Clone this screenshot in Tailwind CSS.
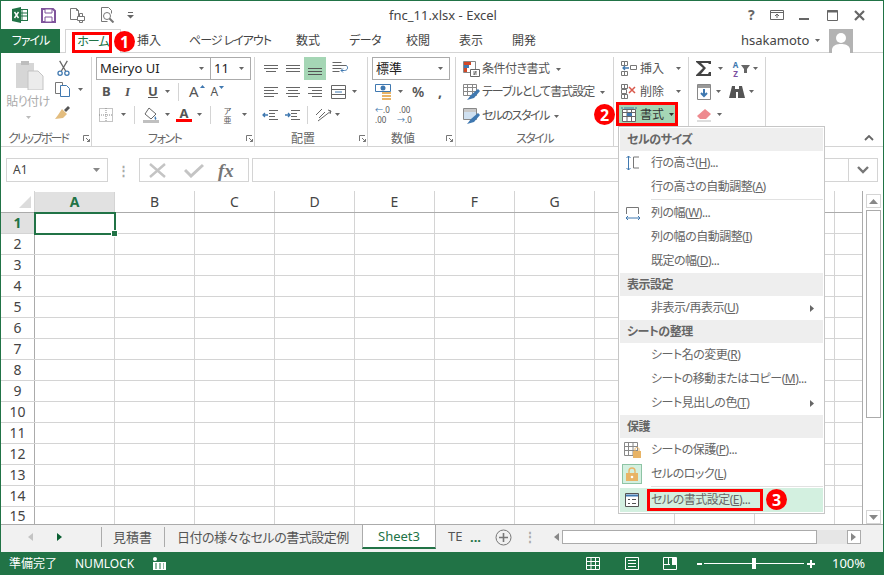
<!DOCTYPE html>
<html lang="ja">
<head>
<meta charset="UTF-8" />
<title>fnc_11.xlsx - Excel</title>
<script src="https://cdn.jsdelivr.net/npm/@tailwindcss/browser@4"></script>
</head>
<body class="bg-white">
<div class="relative w-[884px] h-[575px] overflow-hidden border-l border-r border-t border-[#217346] bg-white text-[12px] leading-none text-[#444] [font-feature-settings:'palt'] font-['Noto_Sans','Noto_Sans_CJK_JP',sans-serif]">

  <!-- title bar -->
  <div class="flex items-center h-[28px]">
    <svg class="ml-[11px]" width="16" height="16" viewBox="0 0 16 16"><rect x="6.5" y="2.5" width="9" height="11" fill="#fff" stroke="#217346"/><path d="M10 3v10M6 6h9M6 9h9" stroke="#217346"/><path d="M0 2l9-2v16l-9-2z" fill="#217346"/><path d="M2.5 5l4 6M6.5 5l-4 6" stroke="#fff" stroke-width="1.4"/></svg>
    <svg class="ml-[13px]" width="15" height="15" viewBox="0 0 15 15"><path d="M1 1h11l2 2v11H1z" fill="none" stroke="#80559c" stroke-width="2"/><path d="M4 1h7v4H4zM4 9h7v5H4z" fill="#fff" stroke="#80559c"/></svg>
    <svg class="ml-[13px]" width="17" height="16" viewBox="0 0 17 16" fill="none" stroke="#777"><path d="M1.500 1.500h6l2 2v9h-8zM7.500 1.500v2h2"/><path d="M8.500 9.500h7v4h-7zM10.500 9.500v-3h3v3M10.500 13.500v2h3v-2" fill="#fff"/></svg>
    <svg class="ml-[14px]" width="16" height="16" viewBox="0 0 16 16" fill="none" stroke="#777"><path d="M1.500 14.500v-14h7l3 3v3"/><circle cx="7" cy="9" r="3.500"/><path d="M9.500 11.500l4 4" stroke-width="2"/><path d="M1.500 14.500h6"/></svg>
    <svg class="ml-[11px]" width="7" height="7" viewBox="0 0 7 7" fill="#666"><path d="M1 0h5v1H1zM0 3h7L3.500 6.500z"/></svg>
    <span class="ml-[255px] w-[108px] text-[13px] text-[#444] whitespace-nowrap">fnc_11.xlsx - Excel</span>
    <span class="ml-[251px] w-[12px] text-[14px] font-bold text-[#666]">?</span>
    <svg class="ml-[10px]" width="14" height="11" viewBox="0 0 14 11" fill="none" stroke="#666"><path d="M.5 .5h13v9H.5zM.5 2.500h13"/><path d="M7 8V4M5 6l2-2 2 2"/></svg>
    <svg class="ml-[15px]" width="10" height="10" viewBox="0 0 10 10"><path d="M0 8h10v2H0z" fill="#666"/></svg>
    <svg class="ml-[18px]" width="11" height="11" viewBox="0 0 11 11" fill="none" stroke="#666"><path d="M.5 .5h10v10H.5z"/><path d="M0 1.500h11" stroke-width="2"/></svg>
    <svg class="ml-[16px]" width="11" height="11" viewBox="0 0 11 11" stroke="#666" stroke-width="2.200"><path d="M1 1l9 9M10 1l-9 9"/></svg>
  </div>

  <!-- ribbon tabs -->
  <div class="flex items-stretch h-[24px]">
    <div class="flex items-center justify-center w-[59px] bg-[#217346] text-white tracking-[-1px]">ファイル</div>
    <div class="w-[5px] border-b border-[#d4d4d4]"></div>
    <div class="flex items-center justify-center w-[56px] border border-b-0 border-[#d4d4d4] text-[#217346] tracking-[-1px]">ホーム</div>
    <div class="flex flex-1 items-center border-b border-[#d4d4d4] text-[#444]">
      <span class="ml-[16px] w-[52px]">挿入</span>
      <span class="w-[107px] tracking-[-1px] whitespace-nowrap">ページ レイアウト</span>
      <span class="w-[53px]">数式</span>
      <span class="w-[57px] tracking-[-0.5px]">データ</span>
      <span class="w-[53px]">校閲</span>
      <span class="w-[53px]">表示</span>
      <span class="w-[229px]">開発</span>
      <span class="w-[66px] text-[13px]">hsakamoto</span>
      <svg class="ml-[8px]" width="5" height="3"><path d="M0 0h5L2.500 3z" fill="#666"/></svg>
      <div class="ml-[9px] w-[24px] h-[24px] bg-[#b3b3b3] overflow-hidden flex items-end justify-center">
        <svg width="24" height="24" viewBox="0 0 24 24" fill="#fff"><circle cx="12" cy="9" r="5"/><path d="M3 24v-4c1-4 5-5 9-5s8 1 9 5v4z"/></svg>
      </div>
    </div>
  </div>

  <!-- ribbon -->
  <div class="flex items-stretch h-[94px] pt-[4px] border-b border-[#d4d4d4] text-[#555]">

    <!-- clipboard -->
    <div class="flex flex-col w-[91px] border-r border-[#d4d4d4]">
      <div class="flex flex-1">
        <div class="flex flex-col items-center w-[52px] pl-[2px]">
          <svg class="mt-[3px] ml-[4px]" width="30" height="30" viewBox="0 0 30 30"><path d="M1 3h18v25H1z" fill="#d6d6d6"/><path d="M6 1h8v4H6z" fill="#bdbdbd"/><path d="M13 11h10l5 5v14H13z" fill="#ececec" stroke="#c4c4c4"/></svg>
          <span class="mt-[6px] text-[#aaa] whitespace-nowrap tracking-[-0.5px]">貼り付け</span>
          <svg class="mt-[8px]" width="5" height="3"><path d="M0 0h5L2.500 3z" fill="#bbb"/></svg>
        </div>
        <div class="flex flex-col">
          <svg class="ml-[3px] mt-[3px]" width="15" height="17" viewBox="0 0 15 20" fill="none"><path d="M3 1l7 12M12 1L5 13" stroke="#666" stroke-width="1.500"/><circle cx="3.500" cy="15.500" r="2.500" stroke="#3f78b0" stroke-width="1.500"/><circle cx="11.500" cy="15.500" r="2.500" stroke="#3f78b0" stroke-width="1.500"/></svg>
          <div class="flex items-center mt-[5px]">
            <svg class="ml-[2px]" width="16" height="15" viewBox="0 0 16 15" fill="#fff" stroke="#777"><path d="M.5 .5h7v11h-7z"/><path d="M5.500 3.500h6l3 3v8h-9z" stroke="#3f78b0"/></svg>
            <svg class="ml-[7px]" width="5" height="3"><path d="M0 0h5L2.500 3z" fill="#666"/></svg>
          </div>
          <svg class="mt-[8px] ml-[1px]" width="16" height="15" viewBox="0 0 16 15"><path d="M10 5l4-4 2 2-4 4z" fill="#555"/><path d="M8 4l5 5-4 4-8 1 3-4z" fill="#e3bd7f"/></svg>
        </div>
      </div>
      <div class="flex items-center h-[15px] text-[#666]"><span class="ml-[7px] w-[75px] whitespace-nowrap tracking-[-2px]">クリップボード</span><svg width="7" height="7" viewBox="0 0 7 7" fill="none" stroke="#777"><path d="M.5 6V.5H6M3 3l3.500 3.500M6.500 4v2.500H4"/></svg></div>
    </div>

    <!-- font -->
    <div class="flex flex-col w-[163px] border-r border-[#d4d4d4]">
      <div class="flex h-[23px] ml-[4px] text-[#222]">
        <div class="flex items-center justify-between w-[115px] pl-[3px] pr-[6px] border border-[#ababab] text-[13px]">Meiryo UI<svg width="5" height="3"><path d="M0 0h5L2.500 3z" fill="#666"/></svg></div>
        <div class="flex items-center justify-between w-[40px] pl-[3px] pr-[6px] border border-l-0 border-[#ababab] text-[13px]">11<svg width="5" height="3"><path d="M0 0h5L2.500 3z" fill="#666"/></svg></div>
      </div>
      <div class="flex items-center h-[23px] text-[#555]">
        <span class="ml-[10px] w-[23px] text-[13px] font-bold">B</span>
        <span class="w-[23px] text-[13px] italic font-['Liberation_Serif',serif] font-bold">I</span>
        <span class="w-[17px] text-[13px] font-bold underline">U</span>
        <svg width="5" height="3"><path d="M0 0h5L2.500 3z" fill="#666"/></svg>
        <div class="ml-[8px] w-px h-[18px] bg-[#d4d4d4]"></div>
        <span class="ml-[10px] text-[15px]">A</span>
        <svg class="ml-px mb-[10px]" width="5" height="3"><path d="M0 3h5L2.500 0z" fill="#3f78b0"/></svg>
        <span class="ml-[6px] text-[12px]">A</span>
        <svg class="ml-px mb-[8px]" width="5" height="3"><path d="M0 0h5L2.500 3z" fill="#3f78b0"/></svg>
      </div>
      <div class="flex items-center h-[23px]">
        <svg class="ml-[7px]" width="14" height="14" viewBox="0 0 14 14" fill="none" stroke="#888" stroke-dasharray="1 1"><path d="M.5 .5h13v13H.5zM7 0v14M0 7h14"/></svg>
        <svg class="ml-[8px]" width="5" height="3"><path d="M0 0h5L2.500 3z" fill="#666"/></svg>
        <div class="ml-[8px] w-px h-[18px] bg-[#d4d4d4]"></div>
        <svg class="ml-[8px]" width="16" height="16" viewBox="0 0 16 16"><path d="M6 1l7 6-5 5-6-5z" fill="#fff" stroke="#666"/><path d="M12 9c1 1.500 2 2.500 1 3.500s-2-1-1-3.500z" fill="#3f78b0"/><path d="M0 13h16v3H0z" fill="#c0c0c0"/></svg>
        <svg class="ml-[6px]" width="5" height="3"><path d="M0 0h5L2.500 3z" fill="#666"/></svg>
        <div class="flex flex-col items-center ml-[6px] w-[16px]"><span class="text-[13px] font-bold leading-[12px]">A</span><div class="w-[16px] h-[3px] bg-[#ff0000]"></div></div>
        <svg class="ml-[5px]" width="5" height="3"><path d="M0 0h5L2.500 3z" fill="#666"/></svg>
        <div class="ml-[8px] w-px h-[18px] bg-[#d4d4d4]"></div>
        <span class="ml-[8px] w-[17px] text-[8px] leading-[9px] text-center">ア<br>亜</span>
        <svg class="ml-[6px]" width="5" height="3"><path d="M0 0h5L2.500 3z" fill="#666"/></svg>
      </div>
      <div class="flex flex-1 items-end">
        <div class="flex items-center h-[15px] text-[#666]"><span class="ml-[56px] w-[98px] tracking-[-1.500px]">フォント</span><svg width="7" height="7" viewBox="0 0 7 7" fill="none" stroke="#777"><path d="M.5 6V.5H6M3 3l3.500 3.500M6.500 4v2.500H4"/></svg></div>
      </div>
    </div>

    <!-- alignment -->
    <div class="flex flex-col w-[113px] border-r border-[#d4d4d4]">
      <div class="flex items-center h-[23px]">
        <svg class="ml-[8px]" width="16" height="10" viewBox="0 0 16 10" stroke="#666"><path d="M1 1.500h14M1 4.500h14M3 7.500h10"/></svg>
        <svg class="ml-[6px]" width="16" height="10" viewBox="0 0 16 10" stroke="#666"><path d="M1 1.500h14M1 4.500h14M1 7.500h14"/></svg>
        <div class="flex items-end justify-center ml-[3px] w-[22px] h-[23px] pb-[5px] bg-[#a5d6b5]"><svg width="16" height="8" viewBox="0 0 16 8" stroke="#555"><path d="M1 1.500h14M1 4.500h14M1 7.500h14"/></svg></div>
        <svg class="ml-[6px]" width="17" height="13" viewBox="0 0 17 13" fill="none"><path d="M.5 .5h9M.5 3.500h14M.5 6.500h9M.5 9.500h7" stroke="#666"/><path d="M14.500 3.500c2 2 1 5-2 5H9l2-2M9 8.500l2 2" stroke="#3f78b0"/></svg>
      </div>
      <div class="flex items-center h-[23px]">
        <svg class="ml-[8px]" width="16" height="10" viewBox="0 0 16 10" stroke="#666"><path d="M1 .5h14M1 3.500h10M1 6.500h14M1 9.500h10"/></svg>
        <svg class="ml-[6px]" width="16" height="10" viewBox="0 0 16 10" stroke="#666"><path d="M1 .5h14M3 3.500h10M1 6.500h14M3 9.500h10"/></svg>
        <svg class="ml-[6px]" width="16" height="10" viewBox="0 0 16 10" stroke="#666"><path d="M1 .5h14M5 3.500h10M1 6.500h14M5 9.500h10"/></svg>
        <svg class="ml-[8px]" width="15" height="14" viewBox="0 0 15 14" fill="none" stroke="#666"><path d="M.5 .5h14v13H.5zM.5 4.500h14M.5 9.500h14"/><path d="M4 7h7" stroke="#3f78b0"/></svg>
        <svg class="ml-[6px]" width="5" height="3"><path d="M0 0h5L2.500 3z" fill="#666"/></svg>
      </div>
      <div class="flex items-center h-[23px]">
        <svg class="ml-[7px]" width="16" height="10" viewBox="0 0 16 10" fill="none"><path d="M7 .5h9M7 3.500h6M7 6.500h6M7 9.500h9" stroke="#666"/><path d="M6 5H1M3 3L1 5l2 2" stroke="#3f78b0" stroke-width="1.300"/></svg>
        <svg class="ml-[6px]" width="16" height="10" viewBox="0 0 16 10" fill="none"><path d="M7 .5h9M7 3.500h6M7 6.500h6M7 9.500h9" stroke="#666"/><path d="M1 5h5M4 3l2 2-2 2" stroke="#3f78b0" stroke-width="1.300"/></svg>
        <div class="ml-[7px] w-px h-[18px] bg-[#d4d4d4]"></div>
        <svg class="ml-[7px]" width="17" height="16" viewBox="0 0 17 16" fill="none" stroke="#666"><path d="M1 8l6-6M4 11l6-6M3 14l13-10M13 3l3 1-1 3"/></svg>
        <svg class="ml-[3px]" width="5" height="3"><path d="M0 0h5L2.500 3z" fill="#666"/></svg>
      </div>
      <div class="flex flex-1 items-end">
        <div class="flex items-center h-[15px] text-[#666]"><span class="ml-[36px] w-[68px]">配置</span><svg width="7" height="7" viewBox="0 0 7 7" fill="none" stroke="#777"><path d="M.5 6V.5H6M3 3l3.500 3.500M6.500 4v2.500H4"/></svg></div>
      </div>
    </div>

    <!-- number -->
    <div class="flex flex-col w-[88px] border-r border-[#d4d4d4]">
      <div class="flex items-center justify-between ml-[4px] w-[78px] h-[23px] pl-[3px] pr-[6px] border border-[#ababab] text-[#222] text-[13px]">標準<svg width="5" height="3"><path d="M0 0h5L2.500 3z" fill="#666"/></svg></div>
      <div class="flex items-center h-[23px]">
        <svg class="ml-[7px]" width="20" height="17" viewBox="0 0 20 17"><path d="M.5 1.500h15v7H.5z" fill="none" stroke="#3f78b0"/><circle cx="8" cy="5" r="2.500" fill="#3f78b0"/><path d="M7 9h9v2H7zM7 12h9v2H7zM7 15h9v2H7z" fill="#e8b467"/></svg>
        <svg class="ml-[3px]" width="5" height="3"><path d="M0 0h5L2.500 3z" fill="#666"/></svg>
        <span class="ml-[9px] w-[26px] text-[14px] font-semibold">%</span>
        <span class="w-[6px] text-[14px] font-bold leading-[8px]">,</span>
      </div>
      <div class="flex items-center h-[23px]">
        <span class="ml-[7px] w-[21px] text-[8px] leading-[10px] text-[#555]"><span class="text-[#3f78b0]">←</span>.0<br>.00</span>
        <span class="ml-[1px] w-[20px] text-[8px] leading-[10px] text-[#555]">&nbsp;.00<br><span class="text-[#3f78b0]">→</span>.0</span>
      </div>
      <div class="flex flex-1 items-end">
        <div class="flex items-center h-[15px] text-[#666]"><span class="ml-[23px] w-[55px]">数値</span><svg width="7" height="7" viewBox="0 0 7 7" fill="none" stroke="#777"><path d="M.5 6V.5H6M3 3l3.500 3.500M6.500 4v2.500H4"/></svg></div>
      </div>
    </div>

    <!-- styles -->
    <div class="flex flex-col w-[158px] border-r border-[#d4d4d4]">
      <div class="flex items-center h-[23px] pt-px">
        <svg class="ml-[7px]" width="17" height="16" viewBox="0 0 17 16" fill="none"><path d="M.5 .5h12v11H.5z" stroke="#888"/><path d="M1 1h7v3H1z" fill="#d24726"/><path d="M1 4h5v3H1z" fill="#3f78b0"/><path d="M1 7h3v4H1z" fill="#d24726"/><path d="M7.500 8.500h9v7h-9z" fill="#fff" stroke="#666"/><path d="M10 11h4M10 13h4M13 10l-2 4" stroke="#555" stroke-width=".8"/></svg>
        <span class="ml-[2px] w-[71px] whitespace-nowrap tracking-[-0.5px]">条件付き書式</span>
        <svg class="ml-[3px]" width="5" height="3"><path d="M0 0h5L2.500 3z" fill="#666"/></svg>
      </div>
      <div class="flex items-center h-[24px]">
        <svg class="ml-[7px]" width="17" height="16" viewBox="0 0 17 16" fill="none"><path d="M.5 .5h13v11H.5zM.5 3.500h13M.5 7.500h13M4.500 0v12M9.500 0v12" stroke="#888"/><path d="M4 16l4-5 7-6 2 2-6 7z" fill="#3f78b0"/></svg>
        <span class="ml-[2px] w-[115px] whitespace-nowrap tracking-[-1px]">テーブルとして書式設定</span>
        <svg class="ml-[3px]" width="5" height="3"><path d="M0 0h5L2.500 3z" fill="#666"/></svg>
      </div>
      <div class="flex items-center h-[24px]">
        <svg class="ml-[7px]" width="17" height="16" viewBox="0 0 17 16" fill="none"><path d="M.5 .5h13v11H.5z" stroke="#888"/><path d="M1 1h12v3H1z" fill="#c9c9c9"/><path d="M1 4h12v7H1z" fill="#cfe0f0"/><path d="M4 16l4-5 7-6 2 2-6 7z" fill="#3f78b0"/></svg>
        <span class="ml-[2px] w-[69px] whitespace-nowrap tracking-[-1.500px]">セルのスタイル</span>
        <svg class="ml-[3px]" width="5" height="3"><path d="M0 0h5L2.500 3z" fill="#666"/></svg>
      </div>
      <div class="flex flex-1 items-end"><span class="flex items-center h-[15px] ml-[60px] text-[#666] tracking-[-1.500px]">スタイル</span></div>
    </div>

    <!-- cells -->
    <div class="flex flex-col w-[75px] border-r border-[#d4d4d4]">
      <div class="flex items-center h-[23px]">
        <svg class="ml-[7px]" width="16" height="15" viewBox="0 0 16 15" fill="none"><path d="M.5 .5h6v4h-6zM.5 10.500h6v4h-6zM3.500 0v5M3.500 10v5" stroke="#777"/><path d="M9.500 4.500h6v4h-6z" stroke="#777"/><path d="M8 7H2M4 5L2 7l2 2" stroke="#3f78b0" stroke-width="1.300"/></svg>
        <span class="ml-[3px] w-[36px]">挿入</span>
        <svg width="5" height="3"><path d="M0 0h5L2.500 3z" fill="#666"/></svg>
      </div>
      <div class="flex items-center h-[23px]">
        <svg class="ml-[7px]" width="16" height="15" viewBox="0 0 16 15" fill="none"><path d="M.5 .5h6v4h-6zM.5 10.500h6v4h-6zM.5 5.500h5v4h-5zM3.500 0v5M3.500 10v5" stroke="#777"/><path d="M8 3l6 6M14 3l-6 6" stroke="#d9594c" stroke-width="1.500"/></svg>
        <span class="ml-[3px] w-[36px]">削除</span>
        <svg width="5" height="3"><path d="M0 0h5L2.500 3z" fill="#666"/></svg>
      </div>
      <div class="flex items-center h-[23px] ml-[4px] w-[60px] bg-[#a5d6b5] text-[#333]">
        <svg class="ml-[3px]" width="16" height="15" viewBox="0 0 16 15" fill="#fff" stroke="#666"><path d="M1.500 2.500h13v12h-13zM1.500 5.500h13M1.500 9.500h13M6 3v11M10.500 3v11"/><path d="M6 6h5v3H6z" fill="#3f78b0" stroke="none"/><path d="M1 0v2M15 0v2M3 1h10" stroke="#3f78b0"/></svg>
        <span class="ml-[3px] w-[29px]">書式</span>
        <svg width="5" height="3"><path d="M0 0h5L2.500 3z" fill="#333"/></svg>
      </div>
    </div>

    <!-- editing -->
    <div class="flex flex-col w-[77px] border-r border-[#d4d4d4]">
      <div class="flex items-center h-[23px]">
        <svg class="ml-[7px]" width="16" height="15" viewBox="0 0 16 15"><path d="M0 0h15v3h-2l-1-1H5l5 5-5 6h7l1-2h2v4H0v-1l7-7L0 1z" fill="#444"/></svg>
        <svg class="ml-[6px]" width="5" height="3"><path d="M0 0h5L2.500 3z" fill="#666"/></svg>
        <span class="ml-[7px] w-[11px] text-[8px] leading-[9px] font-bold text-center"><span class="text-[#3f78b0]">A</span><br><span class="text-[#7b4fa0]">Z</span></span>
        <svg width="9" height="8" viewBox="0 0 9 8"><path d="M0 0h9L6 4v4H3V4z" fill="#666"/></svg>
        <svg class="ml-[3px]" width="5" height="3"><path d="M0 0h5L2.500 3z" fill="#666"/></svg>
      </div>
      <div class="flex items-center h-[23px]">
        <svg class="ml-[8px]" width="14" height="16" viewBox="0 0 14 16" fill="#fff"><path d="M.5 .5h13v15H.5z" stroke="#888"/><path d="M1 1h12v3H1z" fill="#999"/><path d="M7 5v7M4 9l3 3 3-3" stroke="#3f78b0" stroke-width="2" fill="none"/></svg>
        <svg class="ml-[5px]" width="5" height="3"><path d="M0 0h5L2.500 3z" fill="#666"/></svg>
        <svg class="ml-[8px]" width="16" height="14" viewBox="0 0 16 14" fill="#555"><path d="M3 1h3v3h4V1h3l3 12H9V7H7v6H0z"/></svg>
        <svg class="ml-[4px]" width="5" height="3"><path d="M0 0h5L2.500 3z" fill="#666"/></svg>
      </div>
      <div class="flex items-center h-[23px]">
        <svg class="ml-[7px]" width="16" height="14" viewBox="0 0 16 14"><path d="M9 1l6 5-5 5H4L1 8z" fill="#ee8a8f"/><path d="M1 13h14" stroke="#bbb"/></svg>
        <svg class="ml-[5px]" width="5" height="3"><path d="M0 0h5L2.500 3z" fill="#666"/></svg>
      </div>
    </div>

    <div class="flex flex-1 items-end justify-end pr-[9px] pb-[5px]">
      <svg width="10" height="6" viewBox="0 0 10 6" fill="none" stroke="#666" stroke-width="1.800"><path d="M1 5l4-4 4 4"/></svg>
    </div>
  </div>

  <!-- formula bar -->
  <div class="flex items-stretch h-[44px] pt-[11px] pb-[9px] pl-[5px] pr-[5px]">
    <div class="flex items-center justify-between w-[102px] pl-[6px] pr-[7px] border border-[#d4d4d4] text-[#444]">A1<svg width="7" height="4"><path d="M0 0h7L3.500 4z" fill="#888"/></svg></div>
    <div class="flex items-center justify-center w-[31px] text-[#aaa] text-[13px] font-bold">⋮</div>
    <div class="flex items-center w-[110px] border border-[#d4d4d4]">
      <svg class="ml-[9px]" width="17" height="15" viewBox="0 0 17 15" stroke="#c4c4c4" stroke-width="2.400"><path d="M1 1l15 13M16 1L1 14"/></svg>
      <svg class="ml-[18px]" width="20" height="15" viewBox="0 0 20 15" fill="none" stroke="#c4c4c4" stroke-width="3"><path d="M1 7l6 6L19 2"/></svg>
      <span class="ml-[14px] text-[19px] italic font-bold text-[#777] font-['Liberation_Serif',serif]">fx</span>
    </div>
    <div class="flex-1 ml-[3px] border border-[#d4d4d4]"></div>
    <div class="flex items-center justify-center w-[29px] border border-l-0 border-[#d4d4d4]">
      <svg width="12" height="8" viewBox="0 0 12 8" fill="none" stroke="#777" stroke-width="2.400"><path d="M1 1l5 5 5-5"/></svg>
    </div>
  </div>

  <!-- sheet + vertical scrollbar -->
  <div class="flex h-[333px]">
    <div class="relative w-[862px] border-r border-[#ababab] overflow-hidden text-[14px]">
      <div class="flex h-[22px] border-b border-[#ababab] text-[#444]">
        <div class="flex items-end justify-end w-[34px] pr-[3px] pb-[4px] border-r border-[#d4d4d4]"><svg width="12" height="12"><path d="M12 0v12H0z" fill="#dcdcdc"/></svg></div>
        <div class="flex items-center justify-center w-[80px] mt-px bg-[#e1e1e1] font-bold text-[#217346] border-r border-[#d4d4d4]">A</div>
        <div class="flex items-center justify-center w-[80px] border-r border-[#d4d4d4]">B</div>
        <div class="flex items-center justify-center w-[80px] border-r border-[#d4d4d4]">C</div>
        <div class="flex items-center justify-center w-[80px] border-r border-[#d4d4d4]">D</div>
        <div class="flex items-center justify-center w-[80px] border-r border-[#d4d4d4]">E</div>
        <div class="flex items-center justify-center w-[80px] border-r border-[#d4d4d4]">F</div>
        <div class="flex items-center justify-center w-[80px] border-r border-[#d4d4d4]">G</div>
        <div class="flex items-center justify-center w-[80px] border-r border-[#d4d4d4]">H</div>
        <div class="flex items-center justify-center w-[80px] border-r border-[#d4d4d4]">I</div>
        <div class="flex items-center justify-center w-[80px] border-r border-[#d4d4d4]">J</div>
      </div>
      <div class="relative">
        <div class="flex h-[21px] border-b border-[#d4d4d4]"><div class="flex items-center justify-center w-[34px] bg-[#e1e1e1] border-r border-[#ababab] font-bold text-[#217346]">1</div><div class="flex-1 bg-[repeating-linear-gradient(90deg,transparent_0,transparent_79px,#d4d4d4_79px,#d4d4d4_80px)]"></div></div>
        <div class="flex h-[21px] border-b border-[#d4d4d4]"><div class="flex items-center justify-center w-[34px] border-r border-[#ababab]">2</div><div class="flex-1 bg-[repeating-linear-gradient(90deg,transparent_0,transparent_79px,#d4d4d4_79px,#d4d4d4_80px)]"></div></div>
        <div class="flex h-[21px] border-b border-[#d4d4d4]"><div class="flex items-center justify-center w-[34px] border-r border-[#ababab]">3</div><div class="flex-1 bg-[repeating-linear-gradient(90deg,transparent_0,transparent_79px,#d4d4d4_79px,#d4d4d4_80px)]"></div></div>
        <div class="flex h-[21px] border-b border-[#d4d4d4]"><div class="flex items-center justify-center w-[34px] border-r border-[#ababab]">4</div><div class="flex-1 bg-[repeating-linear-gradient(90deg,transparent_0,transparent_79px,#d4d4d4_79px,#d4d4d4_80px)]"></div></div>
        <div class="flex h-[21px] border-b border-[#d4d4d4]"><div class="flex items-center justify-center w-[34px] border-r border-[#ababab]">5</div><div class="flex-1 bg-[repeating-linear-gradient(90deg,transparent_0,transparent_79px,#d4d4d4_79px,#d4d4d4_80px)]"></div></div>
        <div class="flex h-[21px] border-b border-[#d4d4d4]"><div class="flex items-center justify-center w-[34px] border-r border-[#ababab]">6</div><div class="flex-1 bg-[repeating-linear-gradient(90deg,transparent_0,transparent_79px,#d4d4d4_79px,#d4d4d4_80px)]"></div></div>
        <div class="flex h-[21px] border-b border-[#d4d4d4]"><div class="flex items-center justify-center w-[34px] border-r border-[#ababab]">7</div><div class="flex-1 bg-[repeating-linear-gradient(90deg,transparent_0,transparent_79px,#d4d4d4_79px,#d4d4d4_80px)]"></div></div>
        <div class="flex h-[21px] border-b border-[#d4d4d4]"><div class="flex items-center justify-center w-[34px] border-r border-[#ababab]">8</div><div class="flex-1 bg-[repeating-linear-gradient(90deg,transparent_0,transparent_79px,#d4d4d4_79px,#d4d4d4_80px)]"></div></div>
        <div class="flex h-[21px] border-b border-[#d4d4d4]"><div class="flex items-center justify-center w-[34px] border-r border-[#ababab]">9</div><div class="flex-1 bg-[repeating-linear-gradient(90deg,transparent_0,transparent_79px,#d4d4d4_79px,#d4d4d4_80px)]"></div></div>
        <div class="flex h-[21px] border-b border-[#d4d4d4]"><div class="flex items-center justify-center w-[34px] border-r border-[#ababab]">10</div><div class="flex-1 bg-[repeating-linear-gradient(90deg,transparent_0,transparent_79px,#d4d4d4_79px,#d4d4d4_80px)]"></div></div>
        <div class="flex h-[21px] border-b border-[#d4d4d4]"><div class="flex items-center justify-center w-[34px] border-r border-[#ababab]">11</div><div class="flex-1 bg-[repeating-linear-gradient(90deg,transparent_0,transparent_79px,#d4d4d4_79px,#d4d4d4_80px)]"></div></div>
        <div class="flex h-[21px] border-b border-[#d4d4d4]"><div class="flex items-center justify-center w-[34px] border-r border-[#ababab]">12</div><div class="flex-1 bg-[repeating-linear-gradient(90deg,transparent_0,transparent_79px,#d4d4d4_79px,#d4d4d4_80px)]"></div></div>
        <div class="flex h-[21px] border-b border-[#d4d4d4]"><div class="flex items-center justify-center w-[34px] border-r border-[#ababab]">13</div><div class="flex-1 bg-[repeating-linear-gradient(90deg,transparent_0,transparent_79px,#d4d4d4_79px,#d4d4d4_80px)]"></div></div>
        <div class="flex h-[21px] border-b border-[#d4d4d4]"><div class="flex items-center justify-center w-[34px] border-r border-[#ababab]">14</div><div class="flex-1 bg-[repeating-linear-gradient(90deg,transparent_0,transparent_79px,#d4d4d4_79px,#d4d4d4_80px)]"></div></div>
        <div class="flex h-[17px]"><div class="flex items-start justify-center w-[34px] pt-[2px] border-r border-[#ababab]">15</div><div class="flex-1 bg-[repeating-linear-gradient(90deg,transparent_0,transparent_79px,#d4d4d4_79px,#d4d4d4_80px)]"></div></div>
        <!-- selected cell -->
        <div class="absolute left-[33px] top-[-1px] w-[82px] h-[23px] border-2 border-[#217346]"></div>
        <div class="absolute left-[110px] top-[17px] w-[5px] h-[5px] bg-[#217346] border border-white box-content"></div>
      </div>
    </div>
    <div class="flex flex-col items-center flex-1 pt-[3px]">
      <div class="flex items-center justify-center w-[15px] h-[14px] border border-[#d4d4d4]"><svg width="9" height="5"><path d="M0 5h9L4.500 0z" fill="#888"/></svg></div>
      <div class="w-[15px] h-[208px] mt-[2px] border border-[#ababab] bg-white"></div>
      <div class="flex-1"></div>
      <div class="flex items-center justify-center w-[15px] h-[14px] border border-[#d4d4d4]"><svg width="9" height="5"><path d="M0 0h9L4.500 5z" fill="#888"/></svg></div>
    </div>
  </div>

  <!-- sheet tabs -->
  <div class="flex items-center h-[28px] pb-[3px] border-t border-[#ababab] bg-[#f1f1f1] text-[#555]">
    <svg class="ml-[27px]" width="5" height="8"><path d="M5 0v8L0 4z" fill="#c4c4c4"/></svg>
    <svg class="ml-[24px]" width="5" height="8"><path d="M0 0v8l5-4z" fill="#0a5f32"/></svg>
    <div class="ml-[39px] w-px h-[20px] bg-[#ababab]"></div>
    <span class="ml-[11px] w-[51px] text-[13px]">見積書</span>
    <div class="w-px h-[20px] bg-[#ababab]"></div>
    <span class="ml-[12px] w-[185px] text-[13px] whitespace-nowrap tracking-[-0.5px]">日付の様々なセルの書式設定例</span>
    <div class="flex items-center justify-center w-[74px] h-[24px] bg-white border-l border-r border-b-2 border-l-[#ababab] border-r-[#ababab] border-b-[#217346] text-[#217346] text-[13px]">Sheet3</div>
    <span class="ml-[12px] w-[22px] h-[14px] text-[13px]">TE</span>
    <span class="font-bold text-[#217346] text-[13px]">...</span>
    <svg class="ml-[14px]" width="17" height="17" viewBox="0 0 17 17" fill="none" stroke="#777"><circle cx="8.500" cy="8.500" r="7.500"/><path d="M8.500 4v9M4 8.500h9" stroke-width="1.600"/></svg>
    <span class="ml-[12px] w-[30px] text-[#aaa] font-bold">⋮</span>
    <svg width="5" height="8"><path d="M5 0v8L0 4z" fill="#888"/></svg>
    <div class="ml-[3px] w-[255px] h-[14px] bg-white border border-[#ababab]"></div>
    <div class="w-[30px] h-[14px] bg-[#e6e6e6]"></div>
    <div class="flex items-center justify-center w-[14px] h-[14px] border border-[#ababab] bg-white"><svg width="5" height="8"><path d="M0 0v8l5-4z" fill="#888"/></svg></div>
  </div>

  <!-- status bar -->
  <div class="flex items-center h-[23px] bg-[#217346] text-white text-[12px]">
    <span class="ml-[8px] w-[66px]">準備完了</span>
    <span class="w-[77px]">NUMLOCK</span>
    <svg width="14" height="13" viewBox="0 0 14 13" fill="#fff"><circle cx="3" cy="2" r="2"/><path d="M1 5h13v8H1z"/><path d="M3 7h2M7 7h2M11 7h1M3 9h2M7 9h2M11 9h1M3 11h2M7 11h2M11 11h1" stroke="#217346"/></svg>
    <svg class="ml-[420px]" width="14" height="13" viewBox="0 0 14 13" fill="none" stroke="#fff"><path d="M.5 .5h13v12H.5zM5 1v11M9.500 1v11M1 4.500h12M1 8.500h12"/></svg>
    <svg class="ml-[25px]" width="14" height="13" viewBox="0 0 14 13" fill="none" stroke="#fff"><path d="M.5 .5h13v12H.5zM3 3.500h8M3 6.500h8M3 9.500h8"/></svg>
    <svg class="ml-[24px]" width="14" height="13" viewBox="0 0 14 13" fill="#fff"><path d="M.5 .5h13v12H.5z" fill="none" stroke="#fff"/><path d="M5 1h1v6H5zM1 7h6v1H1zM9 1h4v7H9z"/></svg>
    <span class="ml-[20px] w-[5px] h-[2px] bg-white"></span>
    <div class="flex items-center justify-center ml-[2px] w-[100px] h-px bg-white"><div class="w-[4px] h-[11px] bg-white shrink-0"></div></div>
    <svg class="ml-[3px]" width="8" height="8" stroke="#fff" stroke-width="2"><path d="M0 4h8M4 0v8"/></svg>
    <span class="ml-[17px] text-[13px]">100%</span>
  </div>

  <!-- format dropdown menu -->
  <div class="absolute left-[617px] top-[125px] w-[207px] h-[388px] p-px border border-[#c6c6c6] bg-white text-[#666] tracking-[-0.5px] whitespace-nowrap z-10">
    <div class="flex items-center h-[23px] pl-[7px] bg-[#eeeeee] font-bold">セルのサイズ</div>
    <div class="flex items-center h-[24px]"><svg class="ml-[5px]" width="16" height="16" viewBox="0 0 16 16" fill="none"><path d="M3.500 1v14M1.500 3l2-2 2 2M1.500 13l2 2 2-2" stroke="#3f78b0"/><path d="M14 2H8.500v11H14" stroke="#777"/></svg><span class="ml-[10px]">行の高さ(<u>H</u>)...</span></div>
    <div class="flex items-center h-[24px] pl-[31px]">行の高さの自動調整(<u>A</u>)</div>
    <div class="ml-[31px] h-px bg-[#e1e1e1]"></div>
    <div class="flex items-center h-[25px]"><svg class="ml-[5px]" width="16" height="16" viewBox="0 0 16 16" fill="none"><path d="M1.500 9V2.500h12V9" stroke="#777"/><path d="M1 13h14M3 11l-2 2 2 2M13 11l2 2-2 2" stroke="#3f78b0"/></svg><span class="ml-[10px]">列の幅(<u>W</u>)...</span></div>
    <div class="flex items-center h-[24px] pl-[31px]">列の幅の自動調整(<u>I</u>)</div>
    <div class="flex items-center h-[24px] pl-[31px]">既定の幅(<u>D</u>)...</div>
    <div class="flex items-center h-[23px] pl-[7px] bg-[#eeeeee] font-bold">表示設定</div>
    <div class="flex items-center justify-between h-[24px] pl-[31px] pr-[9px]"><span>非表示/再表示(<u>U</u>)</span><svg width="4" height="7"><path d="M0 0v7l4-3.500z" fill="#666"/></svg></div>
    <div class="flex items-center h-[23px] pl-[7px] bg-[#eeeeee] font-bold">シートの整理</div>
    <div class="flex items-center h-[24px] pl-[31px]">シート名の変更(<u>R</u>)</div>
    <div class="flex items-center h-[24px] pl-[31px]">シートの移動またはコピー(<u>M</u>)...</div>
    <div class="flex items-center justify-between h-[24px] pl-[31px] pr-[9px]"><span>シート見出しの色(<u>T</u>)</span><svg width="4" height="7"><path d="M0 0v7l4-3.500z" fill="#666"/></svg></div>
    <div class="flex items-center h-[23px] pl-[7px] bg-[#eeeeee] font-bold">保護</div>
    <div class="flex items-center h-[24px]"><svg class="ml-[4px]" width="18" height="17" viewBox="0 0 18 17" fill="none"><path d="M.5 .5h13v13H.5zM.5 4.500h13M.5 8.500h13M4.500 0v14M9 0v14" stroke="#888"/><rect x="9" y="9" width="8" height="7" fill="#e8b467"/><path d="M11 9V7c0-2 4-2 4 0v2" stroke="#e8b467"/></svg><span class="ml-[9px]">シートの保護(<u>P</u>)...</span></div>
    <div class="flex items-center h-[24px]"><div class="flex items-center justify-center ml-[2px] w-[20px] h-[20px] bg-[#d3f0e0] border border-[#8ec4a5]"><svg width="12" height="14" viewBox="0 0 12 14" fill="none"><path d="M3 7V4c0-4 6-4 6 0v3" stroke="#e8b467" stroke-width="1.400"/><rect y="6" width="12" height="8" fill="#e8b467"/><circle cx="6" cy="10" r="1.300" fill="#fff"/></svg></div><span class="ml-[9px]">セルのロック(<u>L</u>)</span></div>
    <div class="ml-[31px] h-px mb-px bg-[#e1e1e1]"></div>
    <div class="flex items-center h-[24px] bg-[#d3f0e0]"><svg class="ml-[5px]" width="14" height="14" viewBox="0 0 14 14" fill="#fff" stroke="#555"><path d="M.5 .5h13v13H.5z"/><path d="M1 2.500h12" stroke="#3f78b0" stroke-width="2"/><path d="M3 6.500h2M7 6.500h4M3 10.500h2M7 10.500h4"/></svg><span class="ml-[12px]">セルの書式設定(<u>E</u>)...</span></div>
  </div>

  <!-- callouts -->
  <div class="absolute left-[71px] top-[31px] w-[40px] h-[21px] border-[3px] border-[#ff0000] z-20"></div>
  <div class="absolute left-[113px] top-[30px] flex items-center justify-center w-[21px] h-[21px] rounded-full bg-[#ff0000] text-white text-[16px] font-bold z-20">1</div>
  <div class="absolute left-[615px] top-[101px] w-[62px] h-[24px] border-[3px] border-[#ff0000] z-20"></div>
  <div class="absolute left-[593px] top-[103px] flex items-center justify-center w-[21px] h-[21px] rounded-full bg-[#ff0000] text-white text-[16px] font-bold z-20">2</div>
  <div class="absolute left-[646px] top-[488px] w-[116px] h-[22px] border-[3px] border-[#ff0000] z-20"></div>
  <div class="absolute left-[765px] top-[488px] flex items-center justify-center w-[21px] h-[21px] rounded-full bg-[#ff0000] text-white text-[16px] font-bold z-20">3</div>
</div>
</body>
</html>
